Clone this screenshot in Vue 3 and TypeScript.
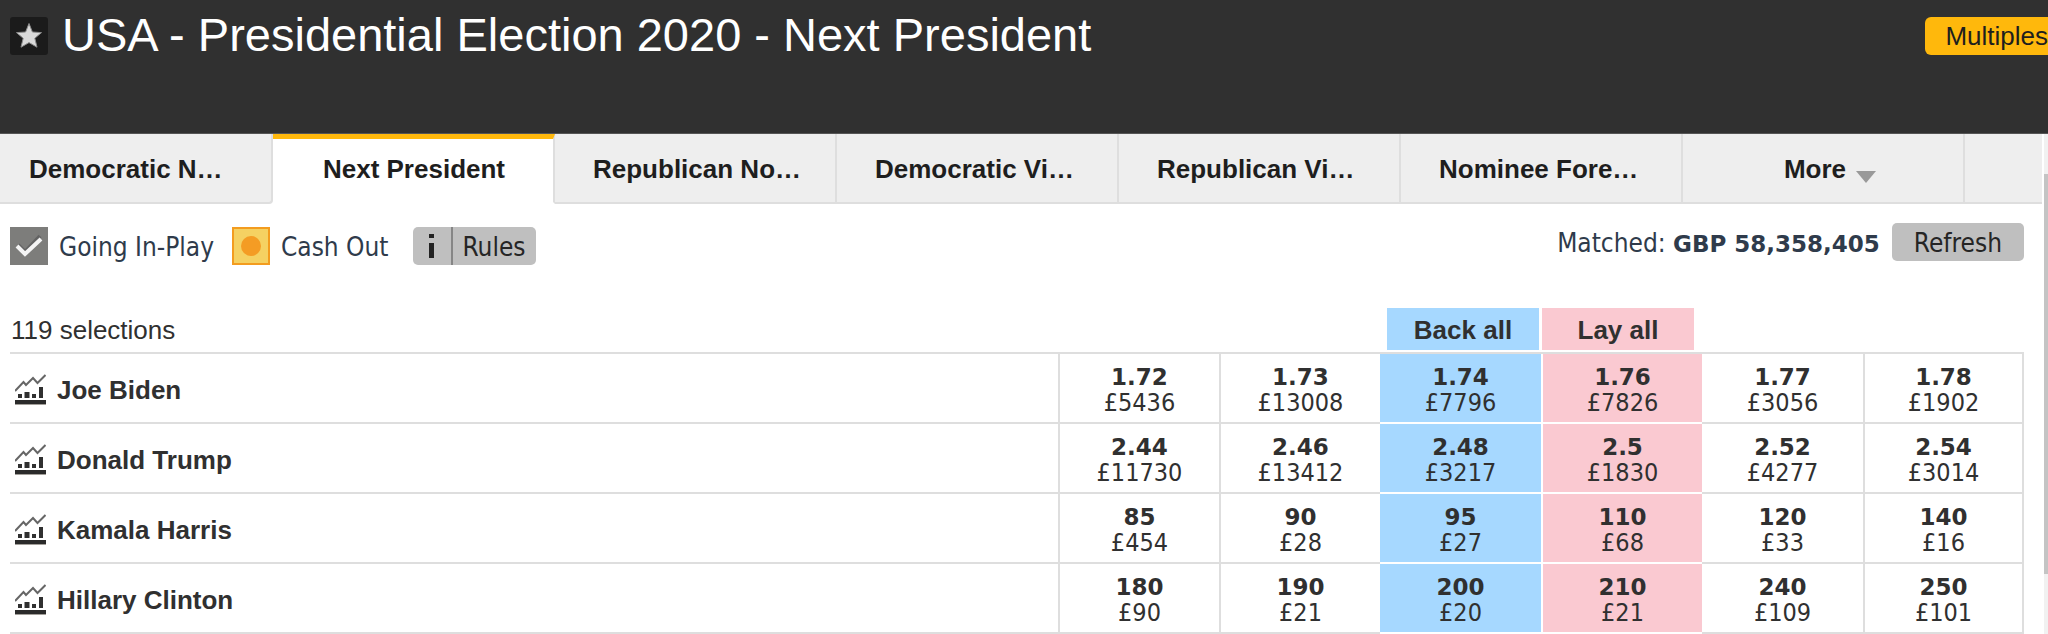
<script setup lang="ts">
interface Tab {
  label: string
  active?: boolean
  clipped?: boolean
}

interface Runner {
  name: string
  prices: [string, string][]
}

const tabs: Tab[] = [
  { label: 'Democratic N…', clipped: true },
  { label: 'Next President', active: true },
  { label: 'Republican No…', clipped: true },
  { label: 'Democratic Vi…', clipped: true },
  { label: 'Republican Vi…', clipped: true },
  { label: 'Nominee Fore…', clipped: true },
]

const columns = ['back-3', 'back-2', 'back', 'lay', 'lay-2', 'lay-3']

const runners: Runner[] = [
  {
    name: 'Joe Biden',
    prices: [['1.72', '£5436'], ['1.73', '£13008'], ['1.74', '£7796'], ['1.76', '£7826'], ['1.77', '£3056'], ['1.78', '£1902']],
  },
  {
    name: 'Donald Trump',
    prices: [['2.44', '£11730'], ['2.46', '£13412'], ['2.48', '£3217'], ['2.5', '£1830'], ['2.52', '£4277'], ['2.54', '£3014']],
  },
  {
    name: 'Kamala Harris',
    prices: [['85', '£454'], ['90', '£28'], ['95', '£27'], ['110', '£68'], ['120', '£33'], ['140', '£16']],
  },
  {
    name: 'Hillary Clinton',
    prices: [['180', '£90'], ['190', '£21'], ['200', '£20'], ['210', '£21'], ['240', '£109'], ['250', '£101']],
  },
]
</script>

<template>
  <div class="page">
    <header class="header">
      <button class="favourite" type="button" aria-label="Favourite">
        <svg viewBox="0 0 38 38" width="38" height="38" aria-hidden="true">
          <path d="M19 6.5 22.4 15 31.5 15.6 24.8 21.3 27 30.2 19 25.6 11 30.2 13.2 21.3 6.5 15.6 15.6 15Z" fill="#dadada" stroke="#8c8c8c" stroke-width="1" stroke-linejoin="round" />
        </svg>
      </button>
      <h1 class="title">USA - Presidential Election 2020 - Next President</h1>
      <button class="multiples" type="button">Multiples</button>
    </header>

    <div class="body">
      <main class="market">
        <nav class="tabs">
          <a
            v-for="tab in tabs"
            :key="tab.label"
            href="#"
            class="tab"
            :class="{ active: tab.active, clipped: tab.clipped }"
          >{{ tab.label }}</a>
          <button class="tab more" type="button">
            More
            <svg viewBox="0 0 20 12" width="20" height="12" aria-hidden="true"><path d="M0 0H20L10 12Z" fill="#999" /></svg>
          </button>
          <span class="tab-rest"></span>
        </nav>

        <div class="toolbar">
          <span class="info">
            <svg viewBox="0 0 38 38" width="38" height="38" aria-hidden="true">
              <rect width="38" height="38" fill="#7d7d7b" />
              <path d="M8 18 15 25 30 9" fill="none" stroke="#636363" stroke-width="4" />
              <path d="M7 19 15 27 31 12" fill="none" stroke="#f4f4f4" stroke-width="4" />
            </svg>
            <span class="label">Going In-Play</span>
          </span>
          <span class="info">
            <svg viewBox="0 0 38 38" width="38" height="38" aria-hidden="true">
              <rect x="1" y="1" width="36" height="36" fill="#f5d162" stroke="#f39c1f" stroke-width="2" />
              <circle cx="19" cy="19" r="10" fill="#f49c24" />
            </svg>
            <span class="label">Cash Out</span>
          </span>
          <button class="rules" type="button">
            <svg viewBox="0 0 38 38" width="38" height="38" aria-hidden="true">
              <rect x="16" y="7" width="5" height="4" fill="#222" />
              <rect x="16" y="16" width="5" height="15" fill="#222" />
            </svg>
            <span class="label">Rules</span>
          </button>
          <div class="matched">
            <span class="label">Matched: <strong>GBP 58,358,405</strong></span>
            <button class="refresh" type="button"><span class="label">Refresh</span></button>
          </div>
        </div>

        <table class="grid">
          <colgroup>
            <col />
            <col v-for="c in columns" :key="c" class="price-col" />
          </colgroup>
          <thead>
            <tr>
              <th class="count" scope="col" colspan="3">119 selections</th>
              <th scope="col"><button class="all back-all" type="button">Back all</button></th>
              <th scope="col"><button class="all lay-all" type="button">Lay all</button></th>
              <td colspan="2"></td>
            </tr>
          </thead>
          <tbody>
            <tr v-for="runner in runners" :key="runner.name">
              <th class="runner" scope="row">
                <div class="runner-line">
                  <svg viewBox="0 0 31 32" width="31" height="32" aria-hidden="true">
                    <path d="M0 17 8.500 8 11 11 18 4 22.500 9 30.500 1" fill="none" stroke="#666" stroke-width="2" />
                    <path d="M3 20H7V24H3ZM9.500 18H14.500V24H9.500ZM17 20H21V24H17ZM24 13H28V24H24Z" fill="#303030" />
                    <rect y="26" width="31" height="4" fill="#2b2b2b" />
                    <rect y="30" width="31" height="1" fill="#a3a09b" />
                  </svg>
                  <span>{{ runner.name }}</span>
                </div>
              </th>
              <td v-for="(price, i) in runner.prices" :key="i" class="cell" :class="columns[i]">
                <button type="button" class="price">
                  <strong>{{ price[0] }}</strong>
                  <span>{{ price[1] }}</span>
                </button>
              </td>
            </tr>
            <tr class="next" aria-hidden="true">
              <td></td>
              <td v-for="c in columns" :key="c" class="cell" :class="c"></td>
            </tr>
          </tbody>
        </table>
      </main>
      <div class="scroll" aria-hidden="true"><div class="thumb"></div></div>
    </div>
  </div>
</template>

<style>
body {
  margin: 0;
  background: #fff;
}
</style>

<style scoped>
.page {
  height: 100vh;
  display: flex;
  flex-direction: column;
  overflow: hidden;
  font-family: "Liberation Sans", Arial, sans-serif;
  font-size: 26px;
  line-height: 30px;
  color: #303030;
}

button {
  border: 0;
  padding: 0;
  background: none;
  font: inherit;
  color: inherit;
  cursor: pointer;
}

svg {
  display: block;
  flex: none;
}

.header {
  flex: none;
  box-sizing: border-box;
  height: 134px;
  padding: 8px 0 0 10px;
  display: flex;
  align-items: flex-start;
  background: #303030;
  border-bottom: 1px solid #555;
}

.favourite {
  flex: none;
  margin-top: 9px;
  border-radius: 3px;
  background: #1b1b1b;
}

.title {
  flex: 1;
  min-width: 0;
  margin: 0 0 0 14px;
  font-size: 47px;
  line-height: 54px;
  font-weight: 400;
  white-space: nowrap;
  color: #fff;
}

.multiples {
  flex: none;
  height: 38px;
  margin: 9px -20px 0 0;
  padding: 0 20px;
  border-radius: 6px;
  background: #ffb80c;
  color: #1e1e1e;
}

.body {
  flex: 1;
  min-height: 0;
  display: flex;
}

.market {
  flex: 1;
  min-width: 0;
  overflow: hidden;
}

.tabs {
  display: flex;
  height: 70px;
  margin-left: -9px;
}

.tab {
  flex: none;
  box-sizing: border-box;
  width: 282px;
  padding: 20px 36px 0 38px;
  border-right: 2px solid #dedede;
  border-bottom: 2px solid #dedede;
  background: #eee;
  color: #1e1e1e;
  font-weight: 700;
  text-align: center;
  text-decoration: none;
  white-space: nowrap;
}

.clipped {
  text-align: left;
}

.tab:first-child {
  border-bottom-right-radius: 4px;
}

.active {
  padding-top: 15px;
  border-top: 5px solid #ffb80c;
  border-bottom-color: #fff;
  background: #fff;
}

.more {
  display: flex;
  justify-content: center;
  gap: 10px;
  padding-left: 50px;
}

.more svg {
  margin-top: 17px;
}

.tab-rest {
  flex: 1;
  border-bottom: 2px solid #dedede;
  background: #eee;
}

.toolbar {
  display: flex;
  align-items: flex-start;
  gap: 18px;
  padding: 23px 18px 0 10px;
  font-family: "DejaVu Sans Condensed", Tahoma, "DejaVu Sans", sans-serif;
  color: #2f3b4b;
}

.toolbar .label {
  padding-top: 2px;
  line-height: 36px;
}

.toolbar strong,
.price strong {
  font-family: "DejaVu Sans", Verdana, sans-serif;
  font-size: 23px;
}

.info {
  display: flex;
  align-items: center;
  gap: 11px;
  white-space: nowrap;
}

.rules {
  display: flex;
  align-items: center;
  margin-left: 6px;
  border-radius: 5px;
  background: #bfbfbf;
  color: #252525;
}

.rules .label {
  padding-left: 10px;
  padding-right: 10px;
  border-left: 2px solid #858585;
}

.matched {
  display: flex;
  align-items: center;
  gap: 12px;
  height: 38px;
  margin: -4px 0 0 auto;
  white-space: nowrap;
}

.refresh {
  display: flex;
  height: 38px;
  padding: 0 22px;
  border-radius: 5px;
  background: #bfbfbf;
  color: #252525;
}

.grid {
  width: calc(100% - 28px);
  margin: 43px 18px 0 10px;
  table-layout: fixed;
  border-collapse: separate;
  border-spacing: 0;
}

.price-col {
  width: 161px;
}

.grid th,
.grid td {
  padding: 0;
}

thead th,
thead td {
  height: 44px;
  border-bottom: 2px solid #dedede;
  vertical-align: top;
}

.grid .count {
  padding: 7px 0 0 1px;
  height: 37px;
  font-weight: 400;
  text-align: left;
}

.all {
  display: block;
  height: 42px;
  padding-top: 2px;
  font-weight: 700;
}

.back-all {
  width: 152px;
  margin-left: 7px;
  background: #a6d8ff;
}

.lay-all {
  width: 152px;
  margin-left: 1px;
  background: #fac9d1;
}

.runner {
  border-bottom: 2px solid #dedede;
  text-align: left;
}

.runner-line {
  display: flex;
  align-items: center;
  gap: 11px;
  padding: 4px 0 0 5px;
}

.cell {
  height: 68px;
  border-left: 2px solid #dedede;
  border-bottom: 2px solid #dedede;
}

.cell.back {
  border-left: 0;
  border-bottom-color: #fff;
  background: #a6d8ff;
}

.cell.lay {
  border-left-color: #fff;
  border-bottom-color: #fff;
  background: #fac9d1;
}

.cell.lay-2 {
  border-left: 0;
}

.cell.lay-3 {
  border-right: 2px solid #dedede;
}

.price {
  display: flex;
  flex-direction: column;
  align-items: center;
  justify-content: center;
  box-sizing: border-box;
  width: 100%;
  height: 68px;
  padding-top: 4px;
  font-family: "DejaVu Sans Condensed", Tahoma, "DejaVu Sans", sans-serif;
  font-size: 25px;
  line-height: 26px;
}

.scroll {
  flex: none;
  width: 4px;
  margin-left: 2px;
  padding-top: 40px;
  background: #f1f1f1;
}

.thumb {
  height: 87%;
  background: #c4c4c4;
}
</style>
